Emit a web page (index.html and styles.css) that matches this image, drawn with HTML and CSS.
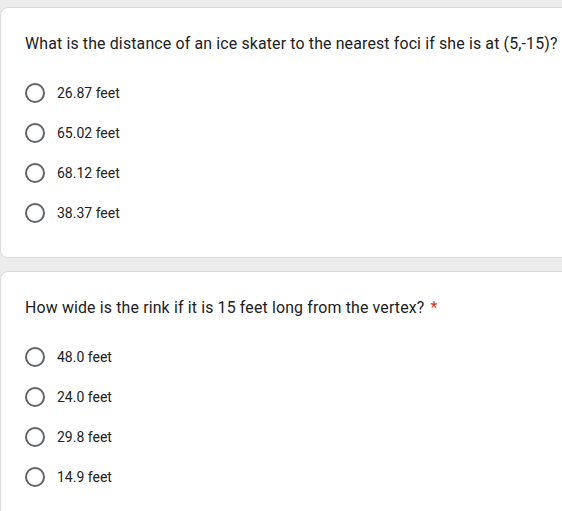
FILE: index.html
```html
<!DOCTYPE html>
<html>
<head>
<meta charset="utf-8">
<link rel="stylesheet" href="styles.css">
</head>
<body>
<div class="page">
  <div class="card">
    <div class="question">What is the distance of an ice skater to the nearest foci if she is at (5,-15)?</div>
    <div class="options">
      <div class="option"><span class="radio"></span><span class="label">26.87 feet</span></div>
      <div class="option"><span class="radio"></span><span class="label">65.02 feet</span></div>
      <div class="option"><span class="radio"></span><span class="label">68.12 feet</span></div>
      <div class="option"><span class="radio"></span><span class="label">38.37 feet</span></div>
    </div>
  </div>
  <div class="card">
    <div class="question">How wide is the rink if it is 15 feet long from the vertex? <span class="req">*</span></div>
    <div class="options">
      <div class="option"><span class="radio"></span><span class="label">48.0 feet</span></div>
      <div class="option"><span class="radio"></span><span class="label">24.0 feet</span></div>
      <div class="option"><span class="radio"></span><span class="label">29.8 feet</span></div>
      <div class="option"><span class="radio"></span><span class="label">14.9 feet</span></div>
    </div>
  </div>
</div>
</body>
</html>
```
FILE: styles.css
```css
html, body {
  margin: 0;
  padding: 0;
  background: #ececec;
  overflow: hidden;
}
body {
  font-family: Roboto, "Liberation Sans", Arial, sans-serif;
  color: #202124;
}
.page {
  padding-top: 7px;
  margin-right: -20px;
}
.card {
  background: #fff;
  border: 1px solid #dadce0;
  border-radius: 8px;
  padding: 24px 24px 24px 24px;
  margin-bottom: 13px;
}
.question {
  font-size: 15.9px;
  letter-spacing: 0.15px;
  line-height: 24px;
  white-space: nowrap;
  color: #202124;
}
.req {
  color: #d93025;
  margin-left: 2px;
}
.options {
  margin-top: 17px;
}
.option {
  display: flex;
  align-items: center;
  height: 40px;
}
.radio {
  box-sizing: border-box;
  width: 20px;
  height: 20px;
  border: 2px solid #5f6368;
  border-radius: 50%;
  flex: none;
}
.label {
  margin-left: 12px;
  font-size: 14px;
  line-height: 20px;
  color: #202124;
}
```
